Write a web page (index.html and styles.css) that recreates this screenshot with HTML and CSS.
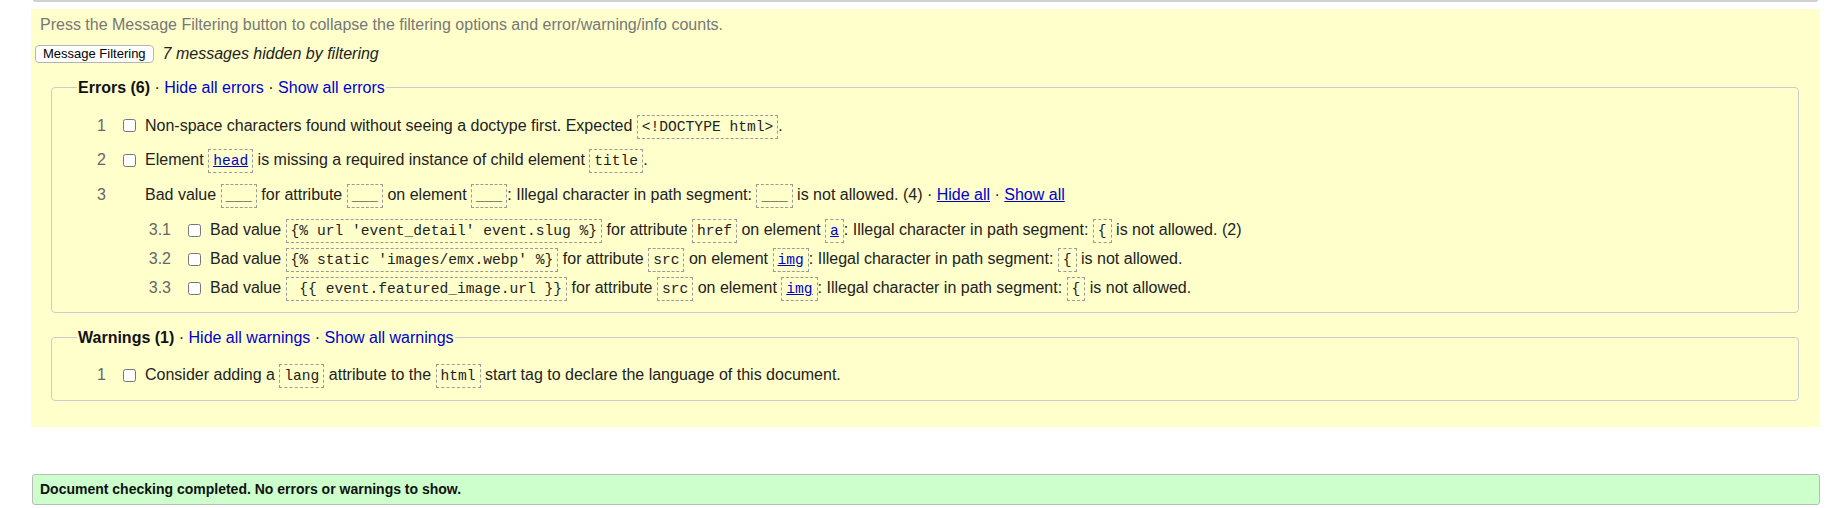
FILE: index.html
```html
<!DOCTYPE html>
<html lang="en">
<head>
<meta charset="utf-8">
<title>Message Filtering</title>
<link rel="stylesheet" href="styles.css">
</head>
<body>
<div class="page">
  <div class="prev"></div>
  <section class="filters">
    <p class="hint">Press the Message Filtering button to collapse the filtering options and error/warning/info counts.</p>
    <div class="toggle"><button class="btn" type="button">Message Filtering</button><em class="hidden-count">7 messages hidden by filtering</em></div>

    <fieldset class="group errs">
      <legend class="legend"><strong>Errors (6)</strong> · <a class="lk">Hide all errors</a> · <a class="lk">Show all errors</a></legend>
      <ul class="msgs">
        <li class="msg"><span class="num">1</span><input class="cb" type="checkbox"><span class="txt">Non-space characters found without seeing a doctype first. Expected <code class="c">&lt;!DOCTYPE html&gt;</code>.</span></li>
        <li class="msg"><span class="num">2</span><input class="cb" type="checkbox"><span class="txt">Element <code class="c"><a class="cl">head</a></code> is missing a required instance of child element <code class="c">title</code>.</span></li>
        <li class="msg"><span class="num">3</span><span class="cb-gap"></span><span class="txt">Bad value <code class="c">___</code> for attribute <code class="c">___</code> on element <code class="c">___</code>: Illegal character in path segment: <code class="c">___</code> is not allowed. (4) · <a class="ul">Hide all</a> · <a class="ul">Show all</a></span></li>
      </ul>
      <ul class="msgs sub">
        <li class="msg"><span class="num">3.1</span><input class="cb" type="checkbox"><span class="txt">Bad value <code class="c">{% url 'event_detail' event.slug %}</code> for attribute <code class="c">href</code> on element <code class="c"><a class="cl">a</a></code>: Illegal character in path segment: <code class="c">{</code> is not allowed. (2)</span></li>
        <li class="msg"><span class="num">3.2</span><input class="cb" type="checkbox"><span class="txt">Bad value <code class="c">{% static 'images/emx.webp' %}</code> for attribute <code class="c">src</code> on element <code class="c"><a class="cl">img</a></code>: Illegal character in path segment: <code class="c">{</code> is not allowed.</span></li>
        <li class="msg"><span class="num">3.3</span><input class="cb" type="checkbox"><span class="txt">Bad value <code class="c">&nbsp;{{ event.featured_image.url }}</code> for attribute <code class="c">src</code> on element <code class="c"><a class="cl">img</a></code>: Illegal character in path segment: <code class="c">{</code> is not allowed.</span></li>
      </ul>
    </fieldset>

    <fieldset class="group warn">
      <legend class="legend"><strong>Warnings (1)</strong> · <a class="lk">Hide all warnings</a> · <a class="lk">Show all warnings</a></legend>
      <ul class="msgs">
        <li class="msg"><span class="num">1</span><input class="cb" type="checkbox"><span class="txt">Consider adding a <code class="c">lang</code> attribute to the <code class="c">html</code> start tag to declare the language of this document.</span></li>
      </ul>
    </fieldset>
  </section>

  <p class="success">Document checking completed. No errors or warnings to show.</p>
</div>
</body>
</html>
```

FILE: styles.css
```css
html, body {
  margin: 0;
  padding: 0;
  background: #fff;
}

body {
  font-family: "Liberation Sans", Arial, sans-serif;
  font-size: 16px;
  color: #222;
}

.page {
  padding: 0 13px 0 31px;
}

.prev {
  height: 2px;
  margin: 0 2px;
  background: #cfcfcf;
  border-radius: 0 0 3px 3px;
}

.filters {
  margin-top: 7px;
  background: #ffc;
  padding: 7px 4px 26px 4px;
}

.hint {
  margin: 0 0 0 5px;
  color: #777;
  font-size: 16px;
  line-height: 18px;
}

.toggle {
  display: flex;
  align-items: center;
  margin-top: 11px;
  height: 18px;
}

.btn {
  font-family: "Liberation Sans", Arial, sans-serif;
  font-size: 13px;
  line-height: 14px;
  color: #000;
  background: #fff;
  border: 1px solid #b5b5b5;
  border-radius: 4px;
  padding: 1px 7px;
  height: 18px;
  margin: 0;
}

.hidden-count {
  margin-left: 9px;
  font-style: italic;
  color: #222;
}

.group {
  margin: 15.5px 17px 0 16px;
  border: 1px solid #ccc;
  border-radius: 4px;
  min-width: 0;
}

.group.errs {
  padding: 12px 0 9.5px 0;
}

.group.warn {
  margin-top: 15.5px;
  padding: 11.5px 0 7px 0;
}

.legend {
  margin-left: 25px;
  padding: 0 1px;
  line-height: 18px;
  color: #111;
}

.legend strong {
  font-weight: bold;
}

.lk {
  color: #0000cc;
  text-decoration: none;
}

.msgs {
  list-style: none;
  margin: 0;
  padding: 0 0 0 14px;
}

.msgs.sub {
  padding-left: 79px;
  margin-top: 3.5px;
}

.msg {
  display: flex;
  align-items: center;
  height: 34.5px;
}

.sub .msg {
  height: 29px;
}

.num {
  width: 40px;
  text-align: right;
  color: #666;
  flex: none;
}

.cb {
  width: 13px;
  height: 13px;
  margin: 0 9px 0 17px;
  flex: none;
}

.cb-gap {
  width: 13px;
  margin: 0 9px 0 17px;
  flex: none;
}

.txt {
  white-space: nowrap;
}

.c {
  font-family: "Liberation Mono", "DejaVu Sans Mono", monospace;
  font-size: 14.6px;
  border: 1px dashed #9a9a9a;
  padding: 3px 4px;
  color: #222;
  white-space: pre;
}

.cl {
  color: #0000cc;
  text-decoration: underline;
}

.ul {
  color: #0000cc;
  text-decoration: underline;
}

.success {
  margin: 47.5px 0 0 1px;
  height: 29px;
  line-height: 29px;
  padding: 0 7px;
  background: #cfc;
  border: 1px solid #bbb;
  border-radius: 3px;
  font-weight: bold;
  font-size: 14px;
  color: #111;
}
```
